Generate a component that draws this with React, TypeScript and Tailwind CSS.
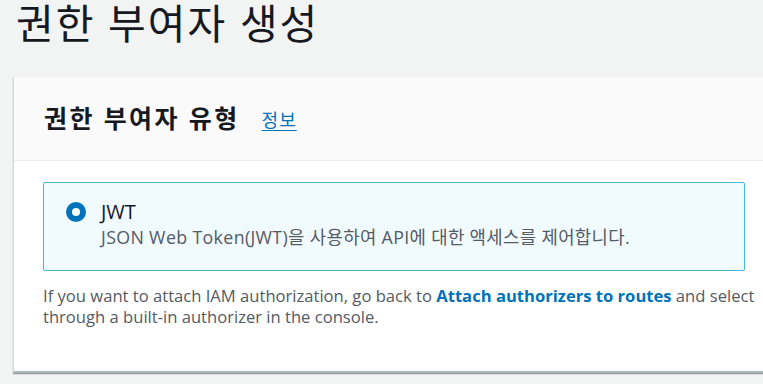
import React from 'react';

const font = { fontFamily: '"Open Sans", "Noto Sans CJK KR", sans-serif' };

const App = () => {
  return (
    <div className="w-[763px] h-[384px] overflow-hidden bg-[#f2f3f3]" style={font}>
      <h1 className="pl-[16px] text-[41px] leading-[46px] text-[#16191f] font-normal tracking-[2px]">
        권한 부여자 생성
      </h1>
      <section className="ml-[13px] mt-[31px] w-[780px] h-[296px] bg-white border-l border-[#d5dbdb] shadow-[0_1px_1px_0_rgba(0,28,36,0.3),1px_1px_1px_0_rgba(0,28,36,0.15)] border-b-[2px] border-b-[#aab7b8]">
        <div className="h-[84px] bg-[#fafafa] border-b border-[#eaeded] flex items-center pl-[30px] gap-[22px]">
          <h2 className="text-[25px] font-bold text-[#16191f] tracking-[2.4px]">권한 부여자 유형</h2>
          <a className="text-[18px] text-[#0073bb] underline underline-offset-[3px] mt-[3px] tracking-[1px]">정보</a>
        </div>
        <div className="pl-[29px] pt-[21px]">
          <div className="w-[702px] h-[89px] rounded-[2px] border border-[#44b9d6] bg-[#f1faff] flex items-start pl-[22px] pt-[17px] gap-[15px]">
            <span className="mt-[2px] w-[20px] h-[20px] rounded-full bg-[#0073bb] flex items-center justify-center shrink-0">
              <span className="w-[8px] h-[8px] rounded-full bg-white" />
            </span>
            <div className="flex flex-col">
              <span className="text-[20px] leading-[24px] text-[#16191f]">JWT</span>
              <span className="text-[17.8px] leading-[26px] text-[#545b64] tracking-[0.35px]">
                JSON Web Token(JWT)을 사용하여 API에 대한 액세스를 제어합니다.
              </span>
            </div>
          </div>
          <p className="mt-[14px] text-[16.6px] leading-[21px] text-[#545b64] w-[760px] whitespace-nowrap">
            If you want to attach IAM authorization, go back to{' '}
            <a className="font-bold text-[#0073bb]">Attach authorizers to routes</a> and select
            <br />
            through a built-in authorizer in the console.
          </p>
        </div>
      </section>
    </div>
  );
};

export default App;
